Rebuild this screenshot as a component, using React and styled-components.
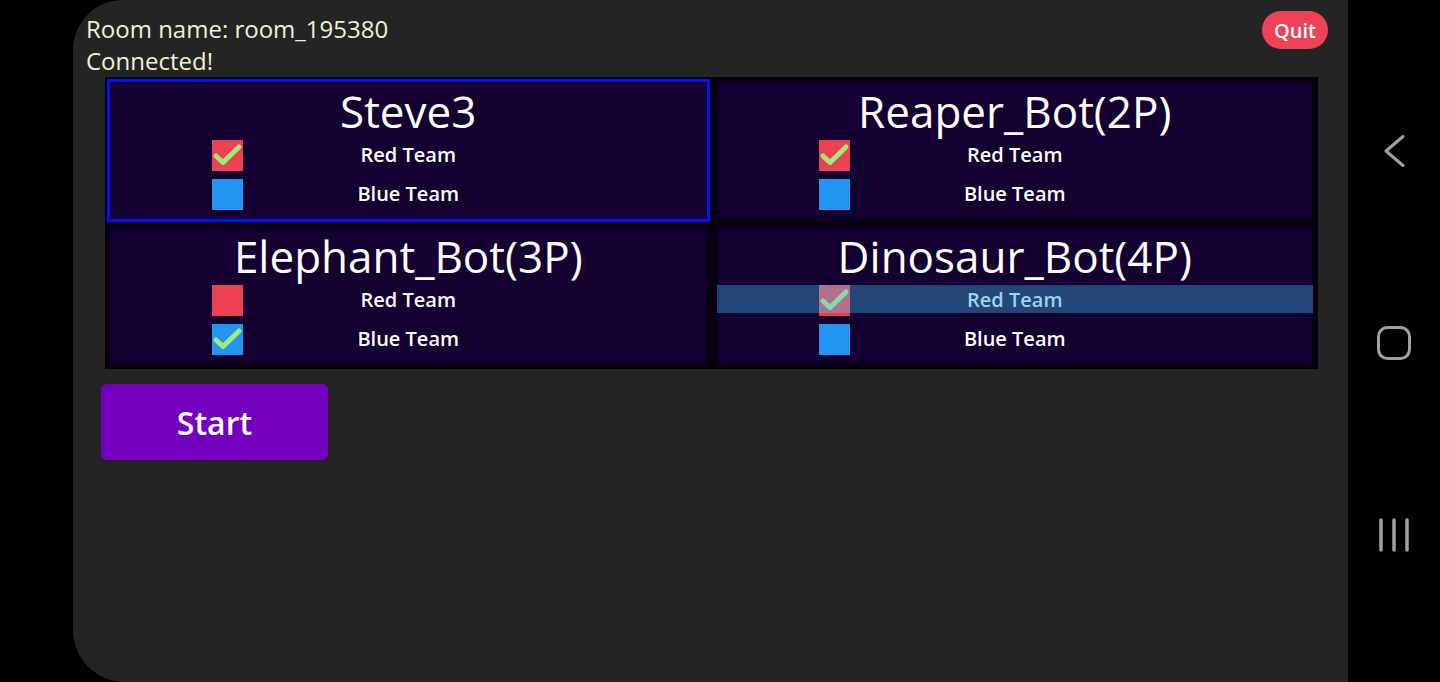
import React from 'react';
import styled, { createGlobalStyle } from 'styled-components';

const GlobalStyle = createGlobalStyle`
  html, body {
    margin: 0;
    padding: 0;
    background: #000;
    font-family: "Open Sans", "Noto Sans", sans-serif;
  }
`;

const Screen = styled.div`
  display: flex;
  height: 682px;
  width: 1440px;
  background: #000;
  overflow: hidden;
`;

const Bezel = styled.div`
  width: 73px;
  flex-shrink: 0;
`;

const Main = styled.main`
  flex: 1;
  background: #242424;
  border-radius: 50px 0 0 52px;
  padding: 11px 20px 0 13px;
  box-sizing: border-box;
`;

const Header = styled.div`
  display: flex;
  justify-content: space-between;
  align-items: flex-start;
`;

const Info = styled.div`
  padding-top: 2px;
  color: #f0f0d8;
  font-size: 24px;
  font-weight: 500;
  line-height: 32px;
`;

const QuitButton = styled.button`
  height: 38px;
  padding: 0 12px;
  border: none;
  border-radius: 19px;
  background: #ee4256;
  color: #fff;
  font-family: inherit;
  font-size: 20px;
  font-weight: 600;
  cursor: pointer;
`;

const Board = styled.div`
  display: grid;
  grid-template-columns: 1fr 1fr;
  column-gap: 4px;
  row-gap: 2px;
  padding: 2px;
  margin: 0 10px 0 19px;
  background: #07000e;
`;

const Card = styled.div`
  border: 3px solid ${(p) => (p.$selected ? '#0610f2' : '#0a0014')};
  background: #130030;
  box-shadow: ${(p) => (p.$selected ? 'none' : 'inset 0 0 3px #000')};
  padding-bottom: 12px;
  display: flex;
  flex-direction: column;
`;

const Name = styled.div`
  height: 58px;
  line-height: 58px;
  text-align: center;
  color: #fff;
  font-size: 44px;
  font-weight: 500;
`;

const TeamRow = styled.div`
  position: relative;
  display: flex;
  align-items: flex-start;
  height: 28px;
  padding-left: 102px;
  padding-right: 133px;
  & + & {
    margin-top: 11px;
  }
  ${(p) =>
    p.$active &&
    `
    &::before {
      content: '';
      position: absolute;
      left: 0;
      right: 0;
      top: 0;
      height: 28px;
      background: rgba(70, 200, 255, 0.35);
      z-index: 1;
    }
  `}
`;

const Box = styled.div`
  width: 31px;
  height: 31px;
  flex-shrink: 0;
  background: ${(p) => (p.$team === 'red' ? '#ec4152' : '#2196f3')};
  display: flex;
  align-items: center;
  justify-content: center;
`;

const Label = styled.div`
  flex: 1;
  position: relative;
  z-index: 2;
  text-align: center;
  line-height: 29px;
  font-size: 20px;
  font-weight: 600;
  color: ${(p) => (p.$active ? '#9ad4f0' : '#fff')};
`;

const StartButton = styled.button`
  display: block;
  margin: 15px 0 0 15px;
  width: 227px;
  height: 76px;
  border: none;
  border-radius: 6px;
  background: #7300bf;
  color: #fff;
  font-family: inherit;
  font-size: 32px;
  font-weight: 600;
  cursor: pointer;
`;

const NavBar = styled.nav`
  width: 92px;
  flex-shrink: 0;
  display: flex;
  flex-direction: column;
  align-items: center;
  justify-content: center;
  gap: 158px;
  padding-top: 4px;
  box-sizing: border-box;
`;

const NavIcon = styled.svg`
  width: 34px;
  height: 34px;
  display: block;
  stroke: #a0a0a0;
  fill: none;
  stroke-linecap: round;
  stroke-linejoin: round;
`;

const Check = () => (
  <svg width="31" height="31" viewBox="0 0 31 31">
    <path
      d="M4 16 L11 22.5 L27 7"
      fill="none"
      stroke="#a2ea78"
      strokeWidth="5"
      strokeLinecap="round"
      strokeLinejoin="round"
    />
  </svg>
);

const players = [
  { name: 'Steve3', team: 'red', selected: true },
  { name: 'Reaper_Bot(2P)', team: 'red' },
  { name: 'Elephant_Bot(3P)', team: 'blue' },
  { name: 'Dinosaur_Bot(4P)', team: 'red', hover: 'red' },
];

const teams = [
  { id: 'red', label: 'Red Team' },
  { id: 'blue', label: 'Blue Team' },
];

const PlayerCard = ({ player }) => (
  <Card $selected={player.selected}>
    <Name>{player.name}</Name>
    {teams.map((t) => (
      <TeamRow key={t.id} $active={player.hover === t.id}>
        <Box $team={t.id}>{player.team === t.id && <Check />}</Box>
        <Label $active={player.hover === t.id}>{t.label}</Label>
      </TeamRow>
    ))}
  </Card>
);

export default function App() {
  return (
    <>
      <GlobalStyle />
      <Screen>
        <Bezel />
        <Main>
          <Header>
            <Info>
              <div>Room name: room_195380</div>
              <div>Connected!</div>
            </Info>
            <QuitButton>Quit</QuitButton>
          </Header>
          <Board>
            {players.map((p) => (
              <PlayerCard key={p.name} player={p} />
            ))}
          </Board>
          <StartButton>Start</StartButton>
        </Main>
        <NavBar>
          <NavIcon viewBox="0 0 34 34" strokeWidth="3">
            <path d="M26 2.5 L9 17 L26 31.5" />
          </NavIcon>
          <NavIcon viewBox="0 0 34 34" strokeWidth="3">
            <rect x="1.5" y="1.5" width="31" height="31" rx="9" />
          </NavIcon>
          <NavIcon viewBox="0 0 34 34" strokeWidth="3.5">
            <path d="M4 2 V32 M17 2 V32 M30 2 V32" />
          </NavIcon>
        </NavBar>
      </Screen>
    </>
  );
}
